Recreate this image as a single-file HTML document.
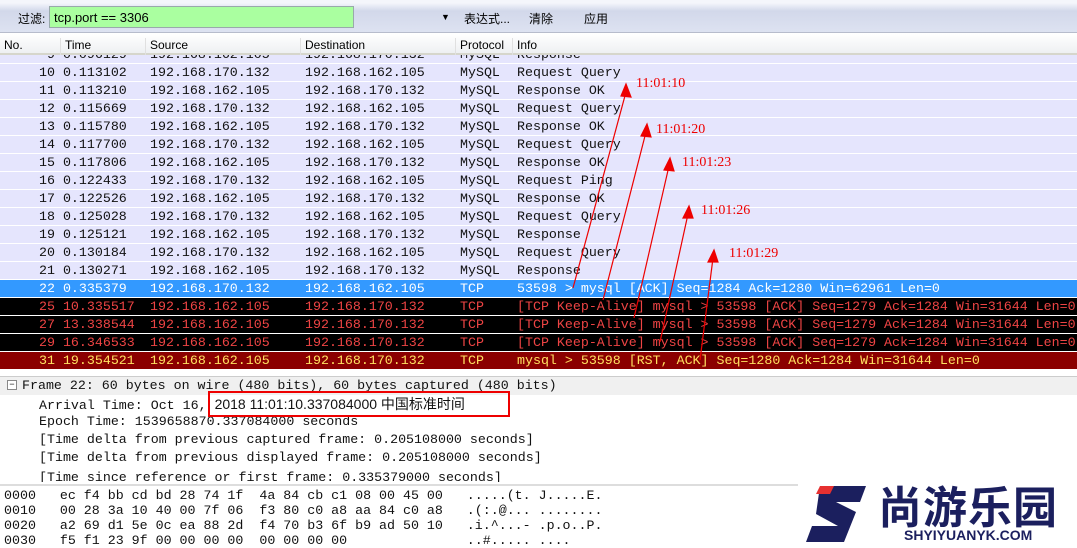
<!DOCTYPE html>
<html><head><meta charset="utf-8"><style>
*{margin:0;padding:0;box-sizing:border-box}
body{width:1077px;height:548px;overflow:hidden;background:#fff;position:relative;font-family:"Liberation Sans","Noto Sans CJK SC",sans-serif}
.tb{position:absolute;left:0;top:0;width:1077px;height:33px;background:linear-gradient(#f4f6fb 0,#f4f6fb 3px,#d2d8ea 11px,#dde2f1 32px);border-bottom:1px solid #b7bccc;font-size:12px}
.tb span{position:absolute;top:10px}
.flt{position:absolute;left:49px;top:6px;width:305px;height:22px;background:#aaffa0;border:1px solid #9aa;font-size:13px;padding:3px 4px}
.hd{position:absolute;left:0;top:34px;width:1077px;height:21px;background:linear-gradient(#fff,#eef0f2);border-bottom:2px solid #d6d6cc;font-size:12px}
.hd span{position:absolute;top:4px;padding-left:4px;border-left:1px solid #e0e0e0;height:17px}
.rows{position:absolute;left:0;top:55px;width:1077px;height:316px;overflow:hidden}
.r{position:absolute;left:0;width:1077px;height:18px;background:#e5e5fd;border-bottom:1px solid #fff;font-family:"Liberation Mono","Noto Sans CJK SC",monospace;font-size:13.3px;color:#111;white-space:pre;line-height:18px}
.r span{position:absolute;top:0}
.sel{background:#3399ff;color:#fff}
.blk{background:#000;color:#ee4444}
.rst{background:#8b0000;color:#ffe060}
.det{position:absolute;left:0;top:376px;width:1077px;height:106px;border-top:1px solid #ccc;font-family:"Liberation Mono","Noto Sans CJK SC",monospace;font-size:13.3px;white-space:pre;color:#111;overflow:hidden}
.det div{position:absolute;height:18px;line-height:18px}
.hex{position:absolute;left:0;top:484px;width:1077px;height:64px;border-top:2px solid #ddd;font-family:"Liberation Mono",monospace;font-size:13.3px;white-space:pre;color:#111}
.hex div{position:absolute;left:4px;height:15px;line-height:15px}
.lbl{position:absolute;color:#e00;font-family:"Liberation Serif",serif;font-size:14px}
</style></head><body>
<div class="tb"><span style="left:18px">过滤:</span><div class="flt">tcp.port == 3306</div>
<span style="left:441px;font-size:9px;top:12px">▼</span><span style="left:464px">表达式...</span><span style="left:529px">清除</span><span style="left:584px">应用</span></div>
<div class="hd"><span style="left:0;border:0">No.</span><span style="left:60px">Time</span><span style="left:145px">Source</span><span style="left:300px">Destination</span><span style="left:455px">Protocol</span><span style="left:512px">Info</span></div>
<div class="rows">
<div class="r" style="top:-9px"><span style="left:47px">9 0.096129</span><span style="left:150px">192.168.162.105</span><span style="left:305px">192.168.170.132</span><span style="left:460px">MySQL</span><span style="left:517px">Response</span></div>
<div class="r" style="top:9px"><span style="left:39px">10 0.113102</span><span style="left:150px">192.168.170.132</span><span style="left:305px">192.168.162.105</span><span style="left:460px">MySQL</span><span style="left:517px">Request Query</span></div>
<div class="r" style="top:27px"><span style="left:39px">11 0.113210</span><span style="left:150px">192.168.162.105</span><span style="left:305px">192.168.170.132</span><span style="left:460px">MySQL</span><span style="left:517px">Response OK</span></div>
<div class="r" style="top:45px"><span style="left:39px">12 0.115669</span><span style="left:150px">192.168.170.132</span><span style="left:305px">192.168.162.105</span><span style="left:460px">MySQL</span><span style="left:517px">Request Query</span></div>
<div class="r" style="top:63px"><span style="left:39px">13 0.115780</span><span style="left:150px">192.168.162.105</span><span style="left:305px">192.168.170.132</span><span style="left:460px">MySQL</span><span style="left:517px">Response OK</span></div>
<div class="r" style="top:81px"><span style="left:39px">14 0.117700</span><span style="left:150px">192.168.170.132</span><span style="left:305px">192.168.162.105</span><span style="left:460px">MySQL</span><span style="left:517px">Request Query</span></div>
<div class="r" style="top:99px"><span style="left:39px">15 0.117806</span><span style="left:150px">192.168.162.105</span><span style="left:305px">192.168.170.132</span><span style="left:460px">MySQL</span><span style="left:517px">Response OK</span></div>
<div class="r" style="top:117px"><span style="left:39px">16 0.122433</span><span style="left:150px">192.168.170.132</span><span style="left:305px">192.168.162.105</span><span style="left:460px">MySQL</span><span style="left:517px">Request Ping</span></div>
<div class="r" style="top:135px"><span style="left:39px">17 0.122526</span><span style="left:150px">192.168.162.105</span><span style="left:305px">192.168.170.132</span><span style="left:460px">MySQL</span><span style="left:517px">Response OK</span></div>
<div class="r" style="top:153px"><span style="left:39px">18 0.125028</span><span style="left:150px">192.168.170.132</span><span style="left:305px">192.168.162.105</span><span style="left:460px">MySQL</span><span style="left:517px">Request Query</span></div>
<div class="r" style="top:171px"><span style="left:39px">19 0.125121</span><span style="left:150px">192.168.162.105</span><span style="left:305px">192.168.170.132</span><span style="left:460px">MySQL</span><span style="left:517px">Response</span></div>
<div class="r" style="top:189px"><span style="left:39px">20 0.130184</span><span style="left:150px">192.168.170.132</span><span style="left:305px">192.168.162.105</span><span style="left:460px">MySQL</span><span style="left:517px">Request Query</span></div>
<div class="r" style="top:207px"><span style="left:39px">21 0.130271</span><span style="left:150px">192.168.162.105</span><span style="left:305px">192.168.170.132</span><span style="left:460px">MySQL</span><span style="left:517px">Response</span></div>
<div class="r sel" style="top:225px"><span style="left:39px">22 0.335379</span><span style="left:150px">192.168.170.132</span><span style="left:305px">192.168.162.105</span><span style="left:460px">TCP</span><span style="left:517px">53598 &gt; mysql [ACK] Seq=1284 Ack=1280 Win=62961 Len=0</span></div>
<div class="r blk" style="top:243px"><span style="left:39px">25 10.335517</span><span style="left:150px">192.168.162.105</span><span style="left:305px">192.168.170.132</span><span style="left:460px">TCP</span><span style="left:517px">[TCP Keep-Alive] mysql &gt; 53598 [ACK] Seq=1279 Ack=1284 Win=31644 Len=0</span></div>
<div class="r blk" style="top:261px"><span style="left:39px">27 13.338544</span><span style="left:150px">192.168.162.105</span><span style="left:305px">192.168.170.132</span><span style="left:460px">TCP</span><span style="left:517px">[TCP Keep-Alive] mysql &gt; 53598 [ACK] Seq=1279 Ack=1284 Win=31644 Len=0</span></div>
<div class="r blk" style="top:279px"><span style="left:39px">29 16.346533</span><span style="left:150px">192.168.162.105</span><span style="left:305px">192.168.170.132</span><span style="left:460px">TCP</span><span style="left:517px">[TCP Keep-Alive] mysql &gt; 53598 [ACK] Seq=1279 Ack=1284 Win=31644 Len=0</span></div>
<div class="r rst" style="top:297px"><span style="left:39px">31 19.354521</span><span style="left:150px">192.168.162.105</span><span style="left:305px">192.168.170.132</span><span style="left:460px">TCP</span><span style="left:517px">mysql &gt; 53598 [RST, ACK] Seq=1280 Ack=1284 Win=31644 Len=0</span></div>
</div>
<svg style="position:absolute;left:0;top:0" width="1077" height="548">
<g stroke="#e00" stroke-width="1.2" fill="#e00">
<line x1="573" y1="288" x2="626" y2="92"/><polygon points="626,84 621,96 631,97"/>
<line x1="603" y1="300" x2="646" y2="132"/><polygon points="647,124 641,136 651,137"/>
<line x1="634" y1="318" x2="669" y2="166"/><polygon points="670,158 664,170 674,171"/>
<line x1="660" y1="342" x2="688" y2="214"/><polygon points="689,206 683,218 693,218"/>
<line x1="700" y1="360" x2="713" y2="258"/><polygon points="714,250 708,262 718,262"/>
</g></svg>
<div class="lbl" style="left:636px;top:76px">11:01:10</div>
<div class="lbl" style="left:656px;top:122px">11:01:20</div>
<div class="lbl" style="left:682px;top:155px">11:01:23</div>
<div class="lbl" style="left:701px;top:203px">11:01:26</div>
<div class="lbl" style="left:729px;top:246px">11:01:29</div>
<div class="det">
<div style="left:0;top:0;width:1077px;background:#f0f0f0"></div>
<div style="left:7px;top:3px;width:10px;height:10px;border:1px solid #888;font-size:9px;line-height:8px;text-align:center;background:#fff">−</div>
<div style="left:22px;top:0">Frame 22: 60 bytes on wire (480 bits), 60 bytes captured (480 bits)</div>
<div style="left:39px;top:18px;line-height:18px">Arrival Time: Oct 16, <span style="font-family:'Liberation Sans','Noto Sans CJK SC',sans-serif;font-size:14px;line-height:18px">2018 11:01:10.337084000 中国标准时间</span></div>
<div style="left:39px;top:36px">Epoch Time: 1539658870.337084000 seconds</div>
<div style="left:39px;top:54px">[Time delta from previous captured frame: 0.205108000 seconds]</div>
<div style="left:39px;top:72px">[Time delta from previous displayed frame: 0.205108000 seconds]</div>
<div style="left:39px;top:92px">[Time since reference or first frame: 0.335379000 seconds]</div>
</div>
<div style="position:absolute;left:208px;top:391px;width:302px;height:26px;border:2px solid #e00"></div>
<div class="hex">
<div style="top:2px">0000   ec f4 bb cd bd 28 74 1f  4a 84 cb c1 08 00 45 00   .....(t. J.....E.</div>
<div style="top:17px">0010   00 28 3a 10 40 00 7f 06  f3 80 c0 a8 aa 84 c0 a8   .(:.@... ........</div>
<div style="top:32px">0020   a2 69 d1 5e 0c ea 88 2d  f4 70 b3 6f b9 ad 50 10   .i.^...- .p.o..P.</div>
<div style="top:47px">0030   f5 f1 23 9f 00 00 00 00  00 00 00 00               ..#..... ....</div>
</div>
<div style="position:absolute;left:798px;top:474px;width:279px;height:74px;background:#fff"></div>
<svg style="position:absolute;left:800px;top:480px" width="80" height="64">
<path d="M20,6 L66,6 L60,22 L36,22 L56,32 L44,62 L6,62 L12,46 L38,46 L16,34 Z" fill="#1b1f5e"/>
<path d="M20,6 L34,6 L30,14 L16,14 Z" fill="#e63030"/></svg>
<div style="position:absolute;left:878px;top:482px;font-family:'Noto Sans CJK SC',sans-serif;font-weight:bold;font-size:44px;line-height:44px;color:#1b1f5e;letter-spacing:1px">尚游乐园</div>
<div style="position:absolute;left:904px;top:527px;font-family:'Liberation Sans',sans-serif;font-weight:bold;font-size:14px;color:#1b1f5e">SHYIYUANYK.COM</div>
</body></html>
